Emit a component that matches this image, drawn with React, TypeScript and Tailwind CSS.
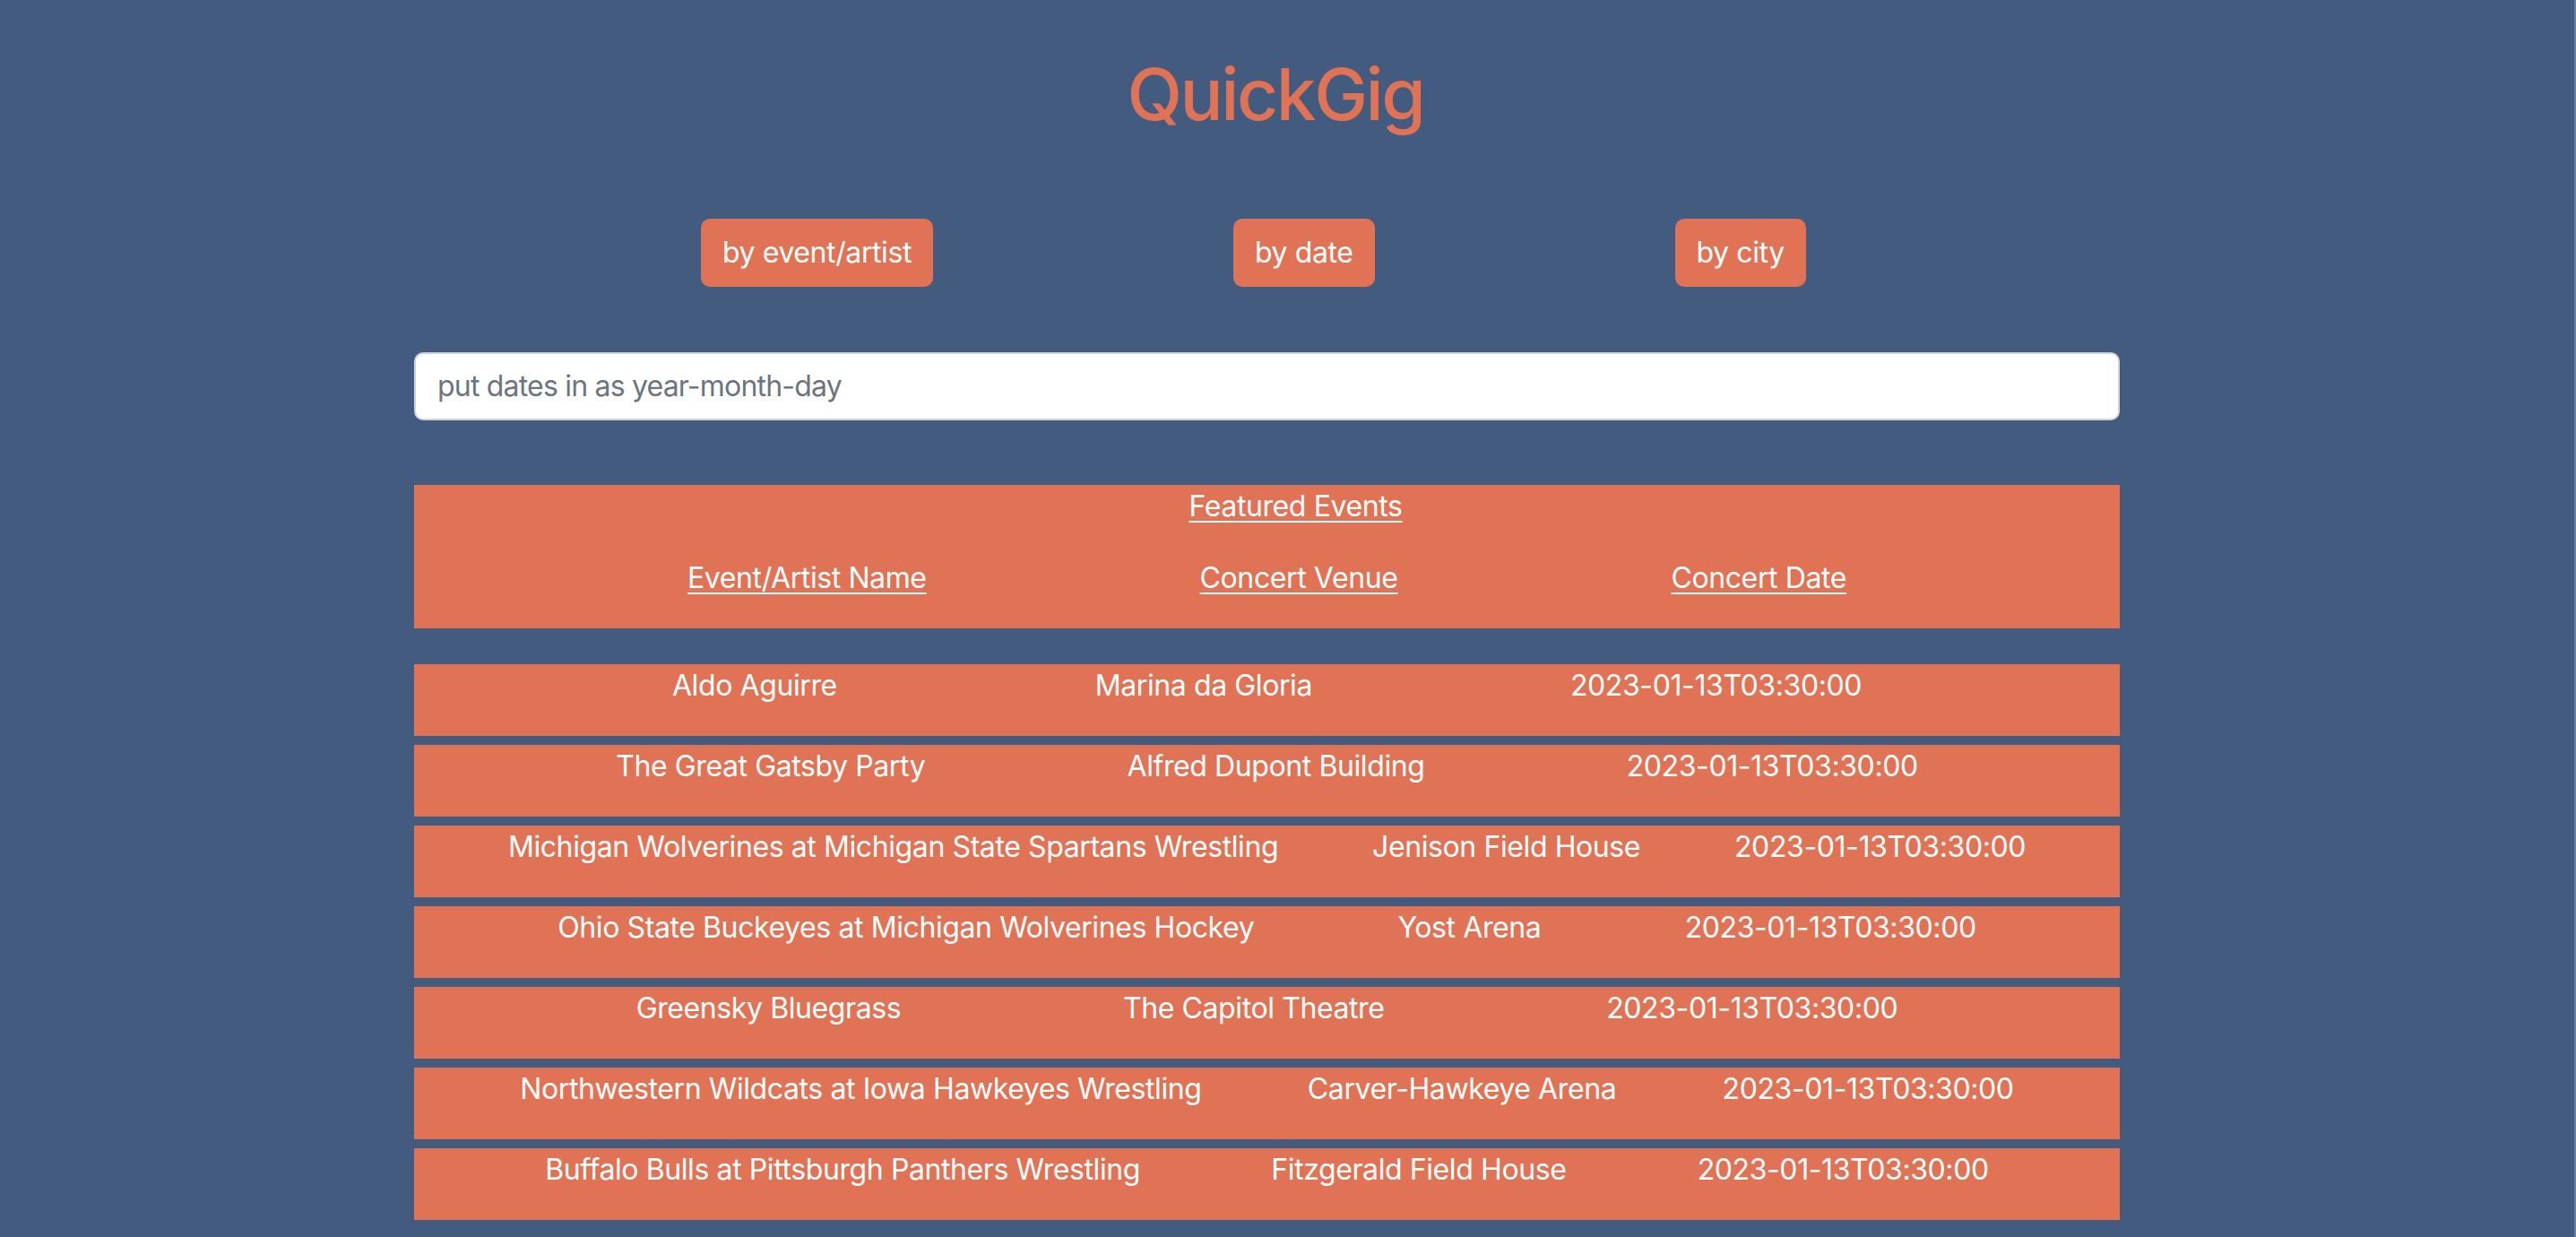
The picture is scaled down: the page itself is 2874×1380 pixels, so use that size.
import { useState } from 'react';

const events = [
  { name: 'Aldo Aguirre', venue: 'Marina da Gloria', date: '2023-01-13T03:30:00' },
  { name: 'The Great Gatsby Party', venue: 'Alfred Dupont Building', date: '2023-01-13T03:30:00' },
  { name: 'Michigan Wolverines at Michigan State Spartans Wrestling', venue: 'Jenison Field House', date: '2023-01-13T03:30:00' },
  { name: 'Ohio State Buckeyes at Michigan Wolverines Hockey', venue: 'Yost Arena', date: '2023-01-13T03:30:00' },
  { name: 'Greensky Bluegrass', venue: 'The Capitol Theatre', date: '2023-01-13T03:30:00' },
  { name: 'Northwestern Wildcats at Iowa Hawkeyes Wrestling', venue: 'Carver-Hawkeye Arena', date: '2023-01-13T03:30:00' },
  { name: 'Buffalo Bulls at Pittsburgh Panthers Wrestling', venue: 'Fitzgerald Field House', date: '2023-01-13T03:30:00' }
];

const searchModes = ['by event/artist', 'by date', 'by city'];

const App = () => {
  const [query, setQuery] = useState('');

  return (
    <div className="min-h-screen bg-[#425b7e] font-['Inter','Liberation_Sans',sans-serif] tracking-[-0.025em] text-white border-r-2 border-[#6b7f9c]">
      <div className="ml-[462px] w-[1903px] pt-[57px] pb-[19px]">
        {/* Title */}
        <h1 className="pl-[19px] text-center text-[80px] leading-[96px] font-medium tracking-[-0.03em] text-[#e07356]">QuickGig</h1>

        {/* Search mode buttons */}
        <div className="mt-[91px] flex pl-[320px] gap-[335px]">
          {searchModes.map((mode) => (
            <button
              key={mode}
              className="px-[24px] py-[14px] text-[32px] leading-[48px] bg-[#e07356] text-white rounded-[10px]"
            >
              {mode}
            </button>
          ))}
        </div>

        {/* Search input */}
        <input
          value={query}
          onChange={(e) => setQuery(e.target.value)}
          placeholder="put dates in as year-month-day"
          className="mt-[73px] block w-full bg-white border-2 border-[#ced4da] rounded-[10px] px-[24px] py-[12px] text-[32px] leading-[48px] tracking-[-0.025em] text-[#212529] placeholder:text-[#6c757d] outline-none"
        />

        {/* Table header */}
        <div className="mt-[72px] bg-[#e07356]">
          <p className="pl-[64px] text-center text-[32px] leading-[48px] mb-[32px]">
            <span className="underline decoration-2 underline-offset-[5px]">Featured Events</span>
          </p>
          <div className="flex justify-evenly text-[32px] leading-[48px] pb-[32px]">
            <span className="underline decoration-2 underline-offset-[5px]">Event/Artist Name</span>
            <span className="underline decoration-2 underline-offset-[5px]">Concert Venue</span>
            <span className="underline decoration-2 underline-offset-[5px]">Concert Date</span>
          </div>
        </div>

        {/* Event rows */}
        <div className="mt-[40px] flex flex-col gap-[10px]">
          {events.map((ev) => (
            <div key={ev.name} className="bg-[#e07356] flex justify-evenly text-[32px] leading-[48px] pb-[32px]">
              <span>{ev.name}</span>
              <span>{ev.venue}</span>
              <span>{ev.date}</span>
            </div>
          ))}
        </div>
      </div>
    </div>
  );
};

export default App;
